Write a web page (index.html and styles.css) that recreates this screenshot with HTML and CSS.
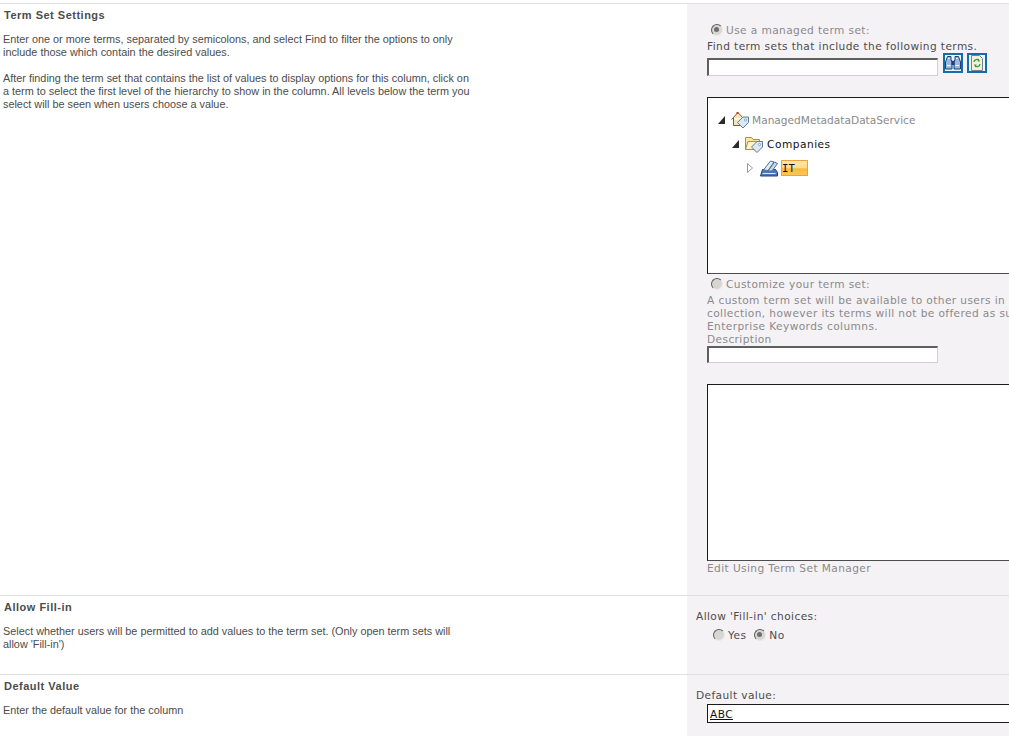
FILE: index.html
```html
<!DOCTYPE html>
<html lang="en">
<head>
  <meta charset="UTF-8">
  <title>Term Set Settings</title>
  <link rel="stylesheet" href="styles.css">
</head>
<body>
  <div class="settings">
    <section class="row row-terms">
      <div class="info">
        <h3>Term Set Settings</h3>
        <p>Enter one or more terms, separated by semicolons, and select Find to filter the options to only include those which contain the desired values.</p>
        <p>After finding the term set that contains the list of values to display options for this column, click on a term to select the first level of the hierarchy to show in the column. All levels below the term you select will be seen when users choose a value.</p>
      </div>
      <div class="field">
        <div class="choice muted"><span class="radio checked"></span>Use a managed term set:</div>
        <div class="find-label">Find term sets that include the following terms.</div>
        <div class="find-row">
          <span class="textbox"></span>
          <span class="icon-btn">
            <svg width="16" height="16" viewBox="0 0 16 16">
              <path d="M2.500 1.500h3.500v4h1v8.500H.5V7z" fill="#9db6de" stroke="#1d3f7c"/>
              <path d="M13.500 1.500H10v4H9v8.500h6.500V7z" fill="#9db6de" stroke="#1d3f7c"/>
              <path d="M6.500 6h3v4h-3z" fill="#1d3f7c"/>
              <path d="M2 10.500h3.500M10.500 10.500H14M3 3.500h1.500M11 3.500h1.500" stroke="#fff"/>
            </svg>
          </span>
          <span class="icon-btn">
            <svg width="16" height="16" viewBox="0 0 16 16">
              <path d="M2.500 .5h8l3 3v12h-11z" fill="#f3f1dc" stroke="#78808c"/>
              <path d="M5 7a2.800 2.800 0 0 1 5-1.500M11 9a2.800 2.800 0 0 1-5 1.500" fill="none" stroke="#3d9a3a" stroke-width="1.300"/>
              <path d="M9.500 3.500l1.500 3H8.500zM6.500 12.500L5 9.500h2.500z" fill="#3d9a3a"/>
            </svg>
          </span>
        </div>
        <div class="tree-box">
          <ul class="tree">
            <li class="node node-root muted">
              <span class="arrow open"></span>
              <svg class="node-icon" width="18" height="18" viewBox="0 0 18 18">
                <path d="M.5 8.500L7 1.500l6.500 7M2.500 7v7.500h9V7" fill="#f6e4b6" stroke="#7a5a3a"/>
                <path d="M5.500 1h2v2h-2z" fill="#b4452e"/>
                <path d="M6.500 11.500l5.500-5.500h5.500v5.500l-5.500 5.500z" fill="#dce8f4" stroke="#5d7f9f"/>
                <circle cx="14.500" cy="9" r="1.100" fill="#fff" stroke="#5d7f9f" stroke-width=".6"/>
              </svg>
              ManagedMetadataDataService
            </li>
            <li class="node level-1">
              <span class="arrow open"></span>
              <svg class="node-icon" width="18" height="18" viewBox="0 0 18 18">
                <path d="M.5 2.500h6l1.500 2h6.500v10H.5z" fill="#fbe7a0" stroke="#a98f4e"/>
                <path d="M.5 14.500l2.500-8h14l-3 8z" fill="#fdf3cd" stroke="#a98f4e"/>
                <path d="M6.500 12l5.500-5.500h5.500V12L12 17.500z" fill="#dce8f4" stroke="#5d7f9f"/>
                <circle cx="14.500" cy="9.500" r="1.100" fill="#fff" stroke="#5d7f9f" stroke-width=".6"/>
              </svg>
              Companies
            </li>
            <li class="node level-2">
              <svg class="arrow-closed" width="6" height="10" viewBox="0 0 6 10">
                <path d="M.5.5l5 4.500-5 4.500z" fill="#fff" stroke="#9a9a9a"/>
              </svg>
              <svg class="node-icon" width="18" height="18" viewBox="0 0 18 18">
                <path d="M.5 17l2-6.500h13l2 3v3.500z" fill="#4b78b8" stroke="#21457f"/>
                <path d="M3.500 11l7-9 3.500 1-6 8.500z" fill="#e3ecf6" stroke="#4a6f9d"/>
                <path d="M8 12l6.500-9 3 1.500-5.500 7.500z" fill="#c7d7ea" stroke="#4a6f9d"/>
                <path d="M2.500 14.500h13" stroke="#dbe6f3"/>
              </svg>
              <span class="selected">IT</span>
            </li>
          </ul>
        </div>
        <div class="choice custom muted"><span class="radio"></span>Customize your term set:</div>
        <p class="custom-note muted">A custom term set will be available to other users in this site<br>collection, however its terms will not be offered as suggestions in<br>Enterprise Keywords columns.</p>
        <div class="muted">Description</div>
        <span class="textbox desc-box"></span>
        <div class="tree-box blank"></div>
        <div class="manager-link muted">Edit Using Term Set Manager</div>
      </div>
    </section>

    <section class="row row-fill">
      <div class="info">
        <h3>Allow Fill-in</h3>
        <p>Select whether users will be permitted to add values to the term set. (Only open term sets will allow 'Fill-in')</p>
      </div>
      <div class="field field-wide">
        <div class="field-label">Allow 'Fill-in' choices:</div>
        <div class="yes-no">
          <span class="radio"></span>Yes
          <span class="radio checked"></span>No
        </div>
      </div>
    </section>

    <section class="row row-default">
      <div class="info">
        <h3>Default Value</h3>
        <p>Enter the default value for the column</p>
      </div>
      <div class="field field-wide">
        <div class="field-label">Default value:</div>
        <div class="default-box"><u>ABC</u></div>
      </div>
    </section>
  </div>
</body>
</html>
```

FILE: styles.css
```css
html, body {
  margin: 0;
  padding: 0;
  height: 100%;
  overflow: hidden;
  background: #fff;
}
.settings {
  padding-top: 3px;
  height: 733px;
  overflow: hidden;
}
.row {
  display: grid;
  grid-template-columns: 687px 322px;
  border-top: 1px solid #e0e0e0;
}
.row-terms { height: 591px; }
.row-fill { height: 78px; }
.row-default { height: 61px; }

.info {
  padding: 4px 0 0 3px;
  width: 472px;
  font-family: "Liberation Sans", Arial, sans-serif;
  font-size: 10.85px;
  line-height: 13px;
  color: #4c4c4c;
}
.info h3 {
  margin: 0 0 11px 1px;
  font-size: 11px;
  line-height: 14px;
  font-weight: bold;
  letter-spacing: .5px;
  color: #4c4c4c;
}
.info p {
  margin: 0 0 13px;
}
.row-fill .info p {
  width: 460px;
}

.field {
  background: #f5f2f6;
  padding-left: 20px;
  overflow: hidden;
  font-family: "DejaVu Sans", Verdana, sans-serif;
  font-size: 10.6px;
  line-height: 13px;
  letter-spacing: .4px;
  color: #4c4c4c;
  white-space: nowrap;
}
.field-wide { padding-left: 9px; }
.muted { color: #8a8a8a; }

.choice {
  display: flex;
  align-items: center;
  padding: 20px 0 0 4px;
  height: 13px;
  gap: 3px;
}
.radio {
  display: inline-block;
  flex: none;
  box-sizing: border-box;
  width: 12px;
  height: 12px;
  margin-top: -2px;
  border-radius: 50%;
  background: #d8d6d2;
  border: 1.500px solid #ebe9e9;
  border-top-color: #5e5e5e;
  border-left-color: #5e5e5e;
  position: relative;
}
.radio.checked::after {
  content: "";
  position: absolute;
  left: 2px;
  top: 2px;
  width: 5px;
  height: 5px;
  border-radius: 50%;
  background: #6f6f6f;
}
.find-label {
  margin-top: 3px;
}
.find-row {
  display: flex;
  align-items: flex-start;
  height: 44px;
}
.textbox {
  display: block;
  box-sizing: border-box;
  width: 231px;
  height: 18px;
  background: #fff;
  border: 1px solid #d0d0d0;
  border-top: 2px solid #5f5f5f;
  border-left: 2px solid #5f5f5f;
}
.find-row .textbox { margin-top: 5px; margin-right: 5px; }
.icon-btn {
  display: flex;
  align-items: center;
  justify-content: center;
  box-sizing: border-box;
  width: 20px;
  height: 20px;
  margin-right: 4px;
  border: 2px solid #0f6fa6;
  background: #eef4fb;
}
.tree-box {
  box-sizing: border-box;
  width: 330px;
  height: 177px;
  background: #fff;
  border: 1px solid #1c1c1c;
  border-bottom-color: #4d4d4d;
}
.tree {
  list-style: none;
  margin: 0;
  padding: 10px 0 0 10px;
}
.node {
  display: flex;
  align-items: center;
  height: 24px;
  color: #111;
}
.node.muted { color: #8a8a8a; }
.node-root { letter-spacing: 0; }
.node-root .node-icon { margin-right: 3px; }
.level-1 { padding-left: 14px; letter-spacing: .5px; }
.level-2 { padding-left: 29px; }
.arrow {
  display: inline-block;
  box-sizing: border-box;
  width: 7px;
  height: 8px;
  margin-right: 6px;
  background: #2b2b2b;
  clip-path: polygon(100% 0, 100% 100%, 0 100%);
}
.arrow-closed {
  flex: none;
  margin-right: 7px;
}
.node-icon {
  flex: none;
  margin-right: 4px;
}
.selected {
  box-sizing: border-box;
  width: 27px;
  height: 16px;
  margin-left: -1px;
  line-height: 14px;
  font-family: "DejaVu Sans Mono", monospace;
  letter-spacing: 0;
  background: linear-gradient(#ffe6a6 0, #ffdc8a 50%, #fbb93f 55%, #fcc65a 100%);
  border: 1px solid #e8a33d;
}
.custom {
  padding-top: 4px;
}
.custom-note {
  margin: 3px 0 0;
}
.desc-box {
  height: 17px;
  margin-top: 0;
}
.blank {
  margin-top: 21px;
}
.manager-link {
  margin-top: 1px;
}
.field-label {
  padding-top: 14px;
}
.yes-no {
  display: flex;
  align-items: center;
  gap: 3px;
  padding: 6px 0 0 17px;
}
.yes-no .radio.checked { margin-left: 5px; }
.default-box {
  box-sizing: border-box;
  width: 330px;
  height: 19px;
  margin: 2px 0 0 11px;
  padding: 3px 2px 0;
  background: #fff;
  border: 1px solid #1c1c1c;
  color: #111;
}
```
